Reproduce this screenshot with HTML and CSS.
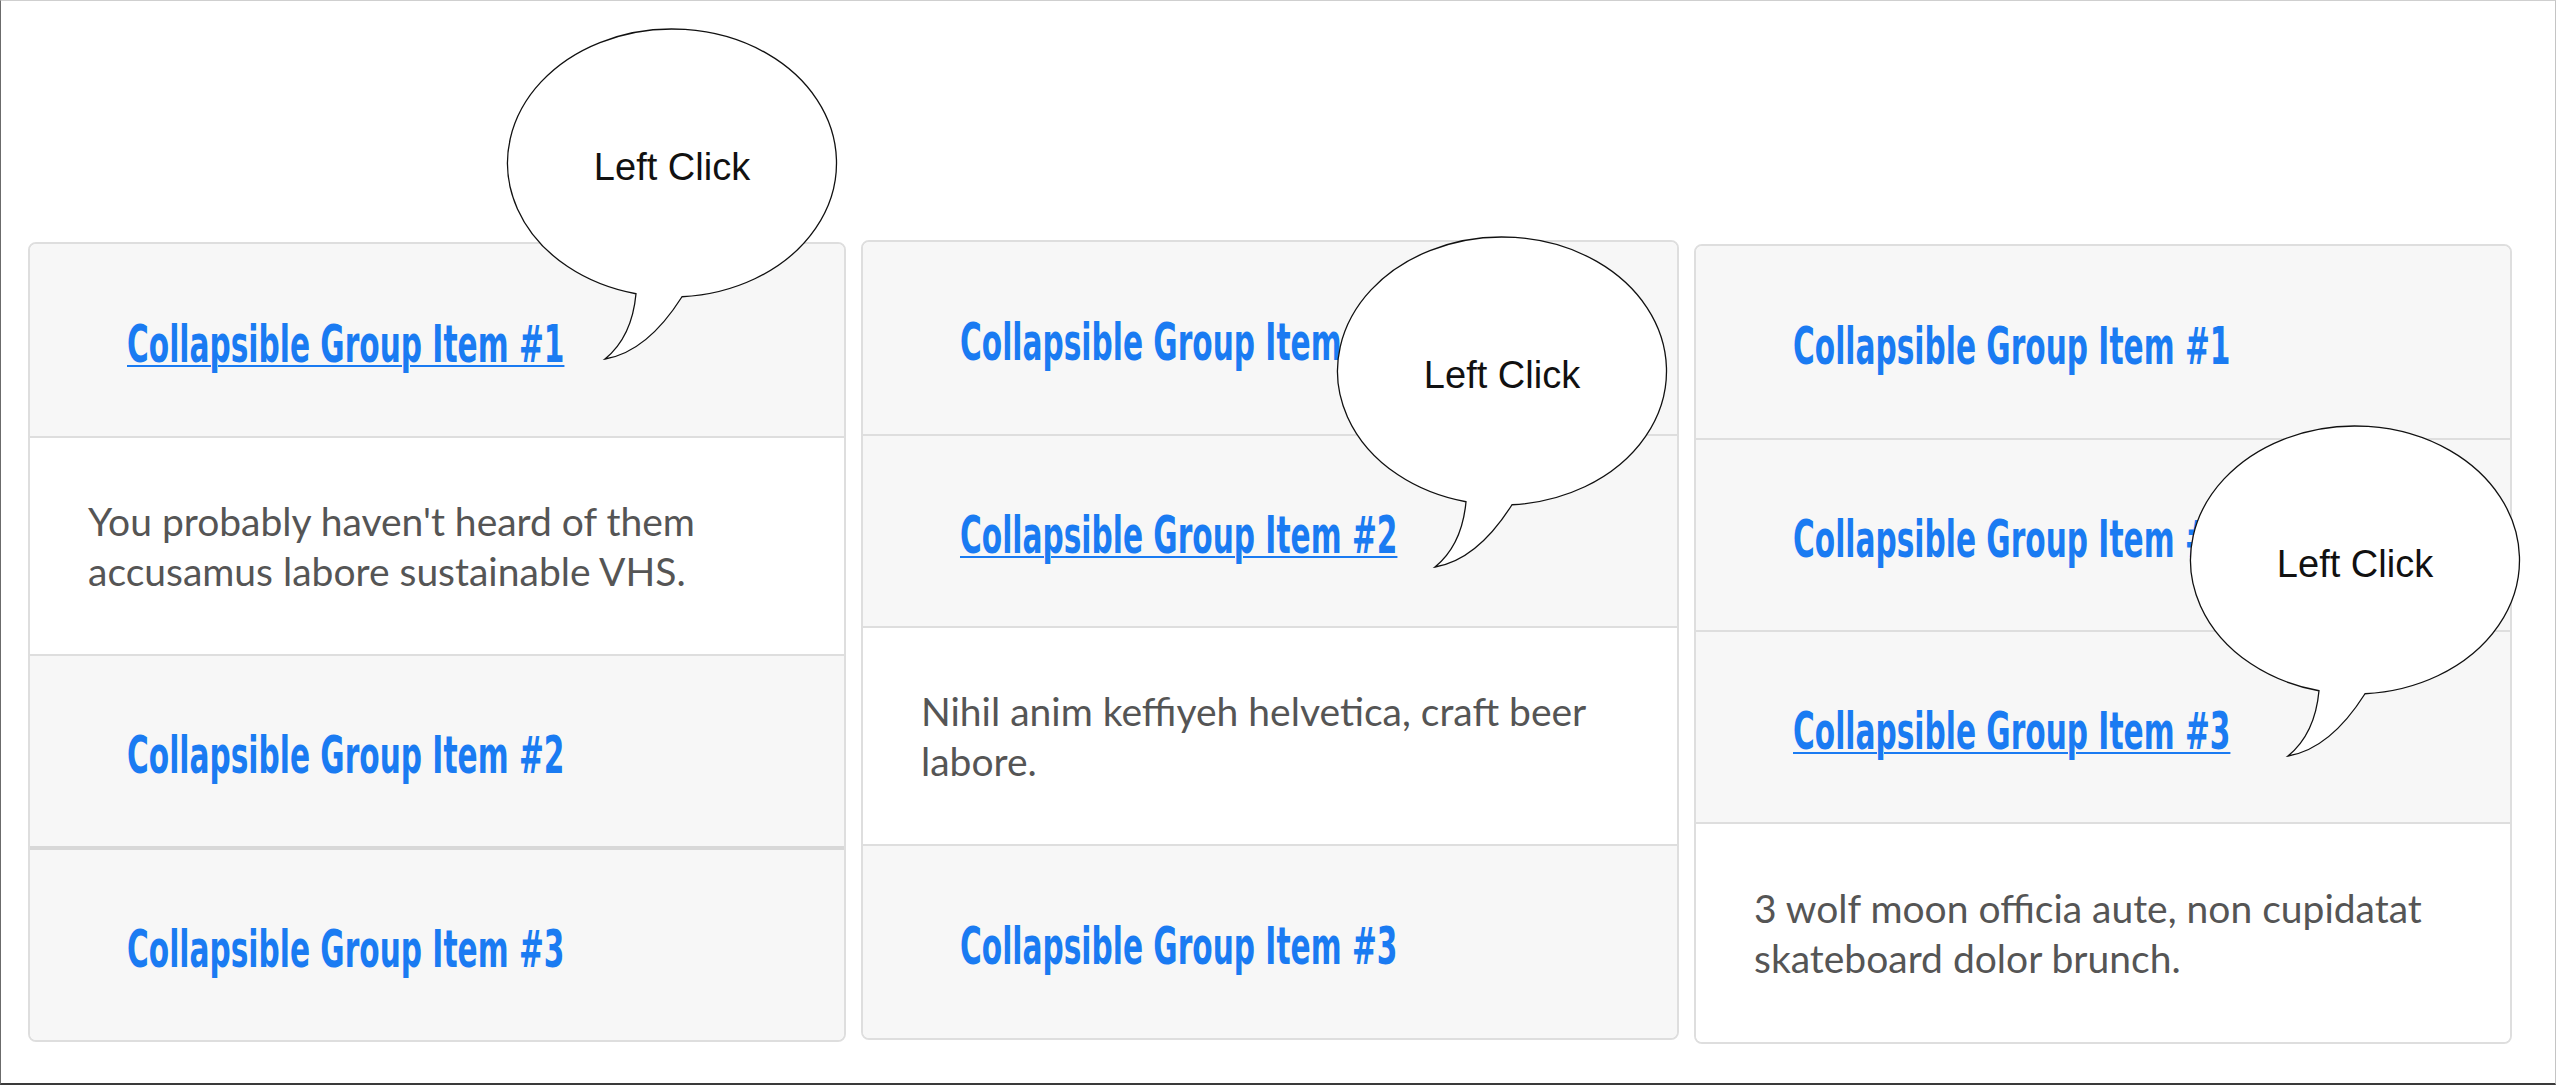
FILE: index.html
```html
<!DOCTYPE html>
<html lang="en">
<head>
<meta charset="utf-8">
<title>Accordion – Left Click</title>
<link rel="stylesheet" href="styles.css">
</head>
<body>
<div class="frame">
  <div class="accordions">
    <div class="card card--a">
      <div class="row row--head"><a class="hdr-link is-hover" href="#">Collapsible Group Item #1</a></div>
      <div class="row row--body"><p class="body-text">You probably haven't heard of them accusamus labore sustainable VHS.</p></div>
      <div class="row row--head"><a class="hdr-link" href="#">Collapsible Group Item #2</a></div>
      <div class="row row--head row--thick row--last"><a class="hdr-link" href="#">Collapsible Group Item #3</a></div>
    </div>
    <div class="card card--b">
      <div class="row row--head"><a class="hdr-link" href="#">Collapsible Group Item #1</a></div>
      <div class="row row--head"><a class="hdr-link is-hover" href="#">Collapsible Group Item #2</a></div>
      <div class="row row--body"><p class="body-text">Nihil anim keffiyeh helvetica, craft beer labore.</p></div>
      <div class="row row--head row--last"><a class="hdr-link" href="#">Collapsible Group Item #3</a></div>
    </div>
    <div class="card card--c">
      <div class="row row--head"><a class="hdr-link" href="#">Collapsible Group Item #1</a></div>
      <div class="row row--head"><a class="hdr-link" href="#">Collapsible Group Item #2</a></div>
      <div class="row row--head"><a class="hdr-link is-hover" href="#">Collapsible Group Item #3</a></div>
      <div class="row row--body row--last"><p class="body-text">3 wolf moon officia aute, non cupidatat skateboard dolor brunch.</p></div>
    </div>
  </div>

  <svg class="bubble bubble--1" viewBox="0 0 334 336" width="334" height="336">
    <path class="bubble-shape" d="M175 269.75 A164.5 134 0 1 0 129 266.75 Q125 310 98 332 Q140 325 175 269.75 Z"/>
    <text class="bubble-text" x="165" y="153" text-anchor="middle">Left Click</text>
  </svg>
  <svg class="bubble bubble--2" viewBox="0 0 334 336" width="334" height="336">
    <path class="bubble-shape" d="M175 269.75 A164.5 134 0 1 0 129 266.75 Q125 310 98 332 Q140 325 175 269.75 Z"/>
    <text class="bubble-text" x="165" y="153" text-anchor="middle">Left Click</text>
  </svg>
  <svg class="bubble bubble--3" viewBox="0 0 334 336" width="334" height="336">
    <path class="bubble-shape" d="M175 269.75 A164.5 134 0 1 0 129 266.75 Q125 310 98 332 Q140 325 175 269.75 Z"/>
    <text class="bubble-text" x="165" y="153" text-anchor="middle">Left Click</text>
  </svg>
</div>
</body>
</html>
```

FILE: styles.css
```css
* { box-sizing: border-box; }

html, body {
  margin: 0;
  padding: 0;
  background: #ffffff;
}

.frame {
  position: relative;
  width: 2556px;
  height: 1085px;
  border-top: 1px solid #cfcfcf;
  border-left: 1px solid #6b6b6b;
  border-right: 1px solid #c4c4c4;
  border-bottom: 2px solid #3a3a3a;
  overflow: hidden;
}

.accordions {
  display: grid;
  grid-template-columns: repeat(3, 818px);
  column-gap: 15px;
  align-items: start;
  padding: 239px 0 0 27px;
}

.card {
  height: 800px;
  border: 2px solid #dedede;
  border-radius: 8px;
  overflow: hidden;
  display: flex;
  flex-direction: column;
  background: #ffffff;
}

.card--a { margin-top: 2px; }
.card--b { margin-top: 0; }
.card--c { margin-top: 4px; }

.row {
  flex: 0 0 auto;
  display: flex;
  align-items: center;
}

.row + .row { border-top: 2px solid #dedede; }
.row--thick { border-top-width: 4px !important; border-top-color: #d8d8d8 !important; }
.row--last { flex: 1 1 auto; }

.row--head {
  height: 192px;
  background: #f7f7f7;
  padding: 8px 0 0 97px;
}

.row--last.row--head { height: auto; }

.row--body {
  height: 218px;
  background: #ffffff;
  padding: 0 58px;
}

.row--last.row--body { height: auto; }

.hdr-link {
  display: inline-block;
  font-family: "DejaVu Sans Condensed", "DejaVu Sans", sans-serif;
  font-stretch: condensed;
  font-weight: 700;
  font-size: 52px;
  line-height: 1;
  white-space: nowrap;
  color: #1a7bf2;
  text-decoration: none;
  transform: scaleX(0.634);
  transform-origin: left center;
}

.hdr-link.is-hover {
  text-decoration: underline;
  text-decoration-thickness: 2px;
  text-underline-offset: 3px;
}

.body-text {
  margin: 0;
  font-family: Lato, "Noto Sans", sans-serif;
  font-size: 39px;
  line-height: 50px;
  color: #555555;
}

.bubble {
  position: absolute;
  overflow: visible;
}

.bubble--1 { left: 506px; top: 26px; }
.bubble--2 { left: 1336px; top: 234px; }
.bubble--3 { left: 2189px; top: 423px; }

.bubble-shape {
  fill: #ffffff;
  stroke: #111111;
  stroke-width: 1.3;
}

.bubble-text {
  font-family: "Liberation Sans", Arial, sans-serif;
  font-size: 38px;
  fill: #111111;
}
```
